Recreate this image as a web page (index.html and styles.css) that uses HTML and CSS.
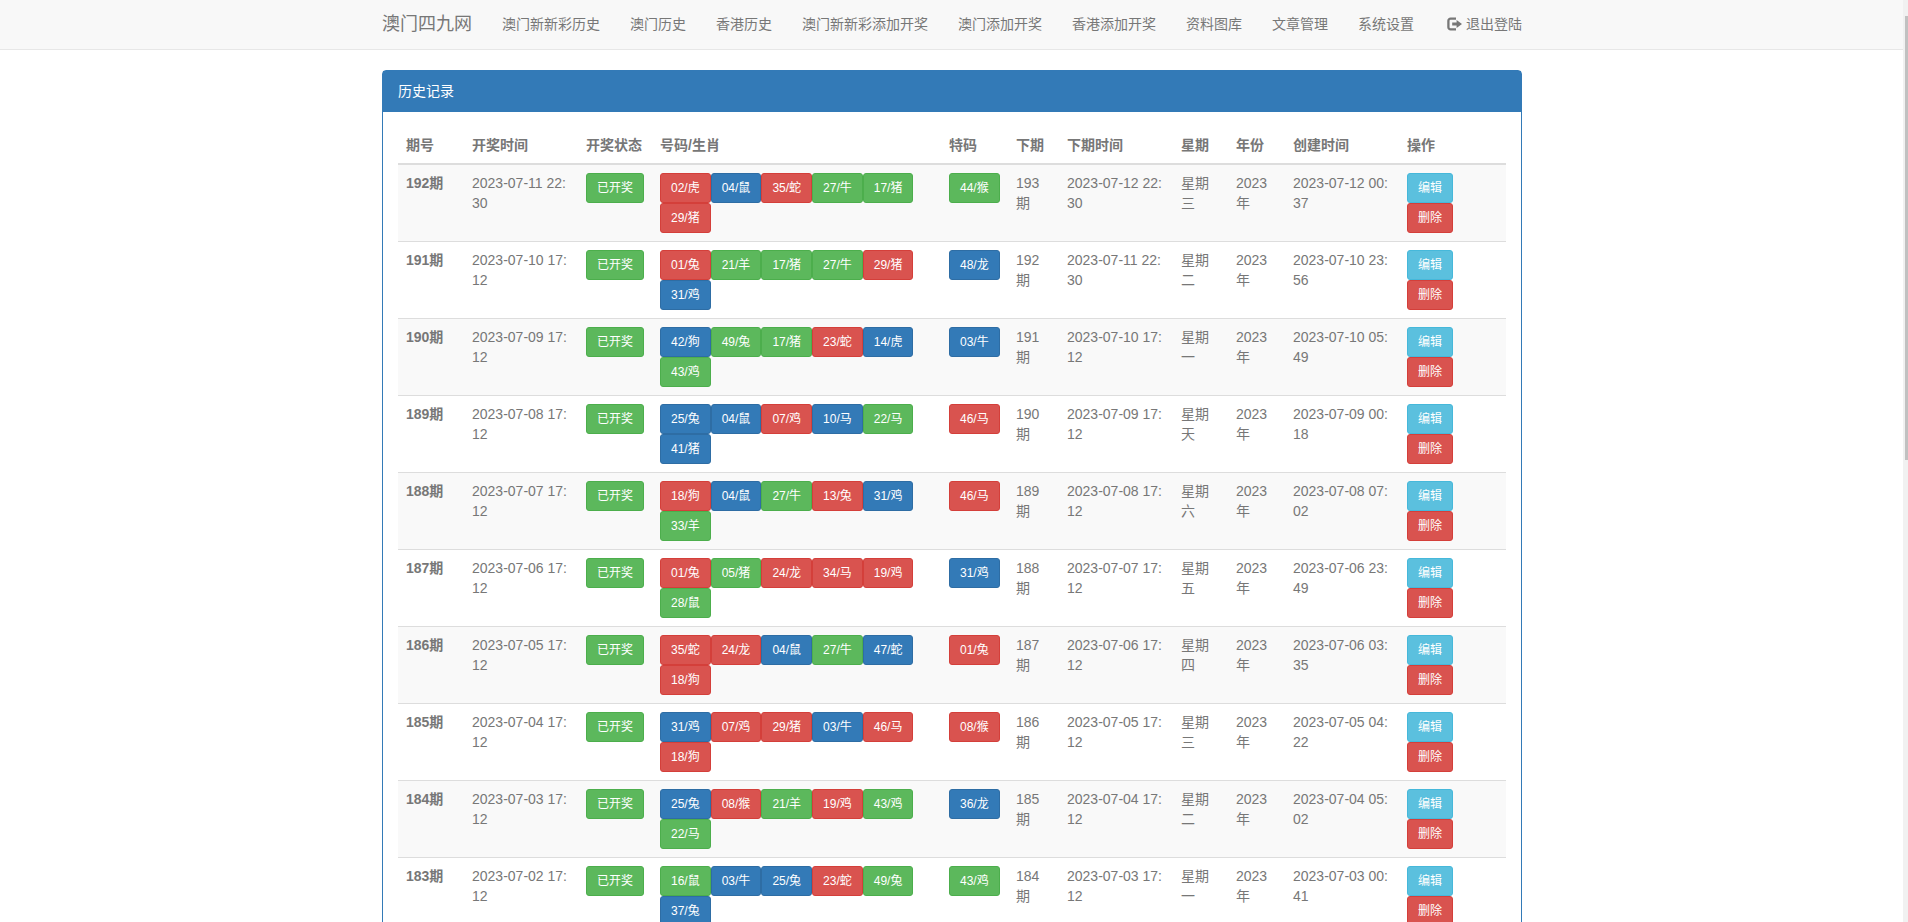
FILE: index.html
```
<!DOCTYPE html>
<html lang="zh-CN">
<head>
<meta charset="utf-8">
<meta name="viewport" content="width=device-width, initial-scale=1">
<title>历史记录</title>
<link rel="stylesheet" href="styles.css">
</head>
<body>
<nav class="navbar">
  <div class="container navbar-inner">
    <a class="brand" href="#">澳门四九网</a>
    <ul class="nav">
      <li><a href="#">澳门新新彩历史</a></li>
      <li><a href="#">澳门历史</a></li>
      <li><a href="#">香港历史</a></li>
      <li><a href="#">澳门新新彩添加开奖</a></li>
      <li><a href="#">澳门添加开奖</a></li>
      <li><a href="#">香港添加开奖</a></li>
      <li><a href="#">资料图库</a></li>
      <li><a href="#">文章管理</a></li>
      <li><a href="#">系统设置</a></li>
    </ul>
    <a class="logout" href="#"><svg class="icon" viewBox="0 0 15 14" aria-hidden="true"><path d="M9 1.6H3.6a2.2 2.2 0 0 0-2.2 2.2v6.4a2.2 2.2 0 0 0 2.2 2.2H9" fill="none" stroke="currentColor" stroke-width="2.3"/><path d="M5.2 5.5h4.4V2.9L15 7l-5.4 4.1V8.5H5.2z" fill="currentColor"/></svg>退出登陆</a>
  </div>
</nav>

<main class="container">
  <section class="panel">
    <h1 class="panel-heading">历史记录</h1>
    <div class="panel-body">
      <table class="table">
        <colgroup>
          <col class="c-issue"><col class="c-time"><col class="c-status"><col class="c-numbers"><col class="c-special"><col class="c-next"><col class="c-time"><col class="c-week"><col class="c-year"><col class="c-time"><col class="c-actions">
        </colgroup>
        <thead>
          <tr><th>期号</th><th>开奖时间</th><th>开奖状态</th><th>号码/生肖</th><th>特码</th><th>下期</th><th>下期时间</th><th>星期</th><th>年份</th><th>创建时间</th><th>操作</th></tr>
        </thead>
        <tbody>
          <tr>
            <th scope="row">192期</th><td>2023-07-11 22:<wbr>30</td>
            <td><button class="btn green">已开奖</button></td>
            <td><div class="group"><button class="btn red">02/虎</button><button class="btn blue">04/鼠</button><button class="btn red">35/蛇</button><button class="btn green">27/牛</button><button class="btn green">17/猪</button><button class="btn red">29/猪</button></div></td>
            <td><button class="btn green">44/猴</button></td>
            <td>193期</td><td>2023-07-12 22:<wbr>30</td><td>星期三</td><td>2023年</td><td>2023-07-12 00:<wbr>37</td>
            <td><div class="group"><button class="btn cyan">编辑</button><button class="btn red">删除</button></div></td>
          </tr>
          <tr>
            <th scope="row">191期</th><td>2023-07-10 17:<wbr>12</td>
            <td><button class="btn green">已开奖</button></td>
            <td><div class="group"><button class="btn red">01/兔</button><button class="btn green">21/羊</button><button class="btn green">17/猪</button><button class="btn green">27/牛</button><button class="btn red">29/猪</button><button class="btn blue">31/鸡</button></div></td>
            <td><button class="btn blue">48/龙</button></td>
            <td>192期</td><td>2023-07-11 22:<wbr>30</td><td>星期二</td><td>2023年</td><td>2023-07-10 23:<wbr>56</td>
            <td><div class="group"><button class="btn cyan">编辑</button><button class="btn red">删除</button></div></td>
          </tr>
          <tr>
            <th scope="row">190期</th><td>2023-07-09 17:<wbr>12</td>
            <td><button class="btn green">已开奖</button></td>
            <td><div class="group"><button class="btn blue">42/狗</button><button class="btn green">49/兔</button><button class="btn green">17/猪</button><button class="btn red">23/蛇</button><button class="btn blue">14/虎</button><button class="btn green">43/鸡</button></div></td>
            <td><button class="btn blue">03/牛</button></td>
            <td>191期</td><td>2023-07-10 17:<wbr>12</td><td>星期一</td><td>2023年</td><td>2023-07-10 05:<wbr>49</td>
            <td><div class="group"><button class="btn cyan">编辑</button><button class="btn red">删除</button></div></td>
          </tr>
          <tr>
            <th scope="row">189期</th><td>2023-07-08 17:<wbr>12</td>
            <td><button class="btn green">已开奖</button></td>
            <td><div class="group"><button class="btn blue">25/兔</button><button class="btn blue">04/鼠</button><button class="btn red">07/鸡</button><button class="btn blue">10/马</button><button class="btn green">22/马</button><button class="btn blue">41/猪</button></div></td>
            <td><button class="btn red">46/马</button></td>
            <td>190期</td><td>2023-07-09 17:<wbr>12</td><td>星期天</td><td>2023年</td><td>2023-07-09 00:<wbr>18</td>
            <td><div class="group"><button class="btn cyan">编辑</button><button class="btn red">删除</button></div></td>
          </tr>
          <tr>
            <th scope="row">188期</th><td>2023-07-07 17:<wbr>12</td>
            <td><button class="btn green">已开奖</button></td>
            <td><div class="group"><button class="btn red">18/狗</button><button class="btn blue">04/鼠</button><button class="btn green">27/牛</button><button class="btn red">13/兔</button><button class="btn blue">31/鸡</button><button class="btn green">33/羊</button></div></td>
            <td><button class="btn red">46/马</button></td>
            <td>189期</td><td>2023-07-08 17:<wbr>12</td><td>星期六</td><td>2023年</td><td>2023-07-08 07:<wbr>02</td>
            <td><div class="group"><button class="btn cyan">编辑</button><button class="btn red">删除</button></div></td>
          </tr>
          <tr>
            <th scope="row">187期</th><td>2023-07-06 17:<wbr>12</td>
            <td><button class="btn green">已开奖</button></td>
            <td><div class="group"><button class="btn red">01/兔</button><button class="btn green">05/猪</button><button class="btn red">24/龙</button><button class="btn red">34/马</button><button class="btn red">19/鸡</button><button class="btn green">28/鼠</button></div></td>
            <td><button class="btn blue">31/鸡</button></td>
            <td>188期</td><td>2023-07-07 17:<wbr>12</td><td>星期五</td><td>2023年</td><td>2023-07-06 23:<wbr>49</td>
            <td><div class="group"><button class="btn cyan">编辑</button><button class="btn red">删除</button></div></td>
          </tr>
          <tr>
            <th scope="row">186期</th><td>2023-07-05 17:<wbr>12</td>
            <td><button class="btn green">已开奖</button></td>
            <td><div class="group"><button class="btn red">35/蛇</button><button class="btn red">24/龙</button><button class="btn blue">04/鼠</button><button class="btn green">27/牛</button><button class="btn blue">47/蛇</button><button class="btn red">18/狗</button></div></td>
            <td><button class="btn red">01/兔</button></td>
            <td>187期</td><td>2023-07-06 17:<wbr>12</td><td>星期四</td><td>2023年</td><td>2023-07-06 03:<wbr>35</td>
            <td><div class="group"><button class="btn cyan">编辑</button><button class="btn red">删除</button></div></td>
          </tr>
          <tr>
            <th scope="row">185期</th><td>2023-07-04 17:<wbr>12</td>
            <td><button class="btn green">已开奖</button></td>
            <td><div class="group"><button class="btn blue">31/鸡</button><button class="btn red">07/鸡</button><button class="btn red">29/猪</button><button class="btn blue">03/牛</button><button class="btn red">46/马</button><button class="btn red">18/狗</button></div></td>
            <td><button class="btn red">08/猴</button></td>
            <td>186期</td><td>2023-07-05 17:<wbr>12</td><td>星期三</td><td>2023年</td><td>2023-07-05 04:<wbr>22</td>
            <td><div class="group"><button class="btn cyan">编辑</button><button class="btn red">删除</button></div></td>
          </tr>
          <tr>
            <th scope="row">184期</th><td>2023-07-03 17:<wbr>12</td>
            <td><button class="btn green">已开奖</button></td>
            <td><div class="group"><button class="btn blue">25/兔</button><button class="btn red">08/猴</button><button class="btn green">21/羊</button><button class="btn red">19/鸡</button><button class="btn green">43/鸡</button><button class="btn green">22/马</button></div></td>
            <td><button class="btn blue">36/龙</button></td>
            <td>185期</td><td>2023-07-04 17:<wbr>12</td><td>星期二</td><td>2023年</td><td>2023-07-04 05:<wbr>02</td>
            <td><div class="group"><button class="btn cyan">编辑</button><button class="btn red">删除</button></div></td>
          </tr>
          <tr>
            <th scope="row">183期</th><td>2023-07-02 17:<wbr>12</td>
            <td><button class="btn green">已开奖</button></td>
            <td><div class="group"><button class="btn green">16/鼠</button><button class="btn blue">03/牛</button><button class="btn blue">25/兔</button><button class="btn red">23/蛇</button><button class="btn green">49/兔</button><button class="btn blue">37/兔</button></div></td>
            <td><button class="btn green">43/鸡</button></td>
            <td>184期</td><td>2023-07-03 17:<wbr>12</td><td>星期一</td><td>2023年</td><td>2023-07-03 00:<wbr>41</td>
            <td><div class="group"><button class="btn cyan">编辑</button><button class="btn red">删除</button></div></td>
          </tr>
        </tbody>
      </table>
    </div>
  </section>
</main>
<div class="scrollbar" aria-hidden="true"><div class="thumb"></div></div>
</body>
</html>
```

FILE: styles.css
```
* { box-sizing: border-box; }

body {
  margin: 0;
  height: 100vh;
  overflow: hidden;
  padding-right: 4px;
  background: #fff;
  color: #777;
  font-family: "Liberation Sans", "Noto Sans CJK SC", sans-serif;
  font-size: 14px;
  line-height: 20px;
}

a { color: inherit; text-decoration: none; }

.container {
  max-width: 1170px;
  margin: 0 auto;
  padding: 0 15px;
}

/* Top navigation */
.navbar {
  margin: 0 -4px 20px 0;
  padding-right: 4px;
  background: #f8f8f8;
  border-bottom: 1px solid #e7e7e7;
}
.navbar-inner {
  display: flex;
  align-items: center;
  min-height: 49px;
  padding-bottom: 2px;
}
.brand { margin-right: 15px; font-size: 18px; white-space: nowrap; }
.nav {
  display: flex;
  margin: 0;
  padding: 0;
  list-style: none;
}
.nav a { display: block; padding: 13px 15px; white-space: nowrap; }
.logout {
  display: flex;
  align-items: center;
  gap: 4px;
  margin-left: auto;
  white-space: nowrap;
}
.icon { width: 15px; height: 14px; }

/* Panel */
.panel {
  border: 1px solid #337ab7;
  border-radius: 4px;
}
.panel-heading {
  margin: 0;
  padding: 10px 15px 11px;
  background: #337ab7;
  color: #fff;
  font-size: 14px;
  font-weight: 400;
}
.panel-body { padding: 15px; }

/* Records table */
.table {
  width: 100%;
  table-layout: fixed;
  border-collapse: collapse;
}
.table th,
.table td {
  padding: 8px;
  border-top: 1px solid #ddd;
  text-align: left;
  vertical-align: top;
}
.table thead th { border-top: 0; border-bottom: 2px solid #ddd; }
.table tbody tr:nth-child(odd) { background: #f9f9f9; }

.c-issue { width: 66px; }
.c-time { width: 114px; }
.c-status { width: 74px; }
.c-numbers { width: 289px; }
.c-special { width: 67px; }
.c-next { width: 51px; }
.c-week { width: 55px; }
.c-year { width: 57px; }
.c-actions { width: 107px; }

.group { display: flex; flex-wrap: wrap; }

.btn {
  display: block;
  padding: 5px 10px;
  border: 1px solid;
  border-radius: 3px;
  color: #fff;
  font-family: inherit;
  font-size: 12px;
  line-height: 18px;
  white-space: nowrap;
  cursor: pointer;
}
.green { background: #5cb85c; border-color: #4cae4c; }
.red { background: #d9534f; border-color: #d43f3a; }
.blue { background: #337ab7; border-color: #2e6da4; }
.cyan { background: #5bc0de; border-color: #46b8da; }

/* Page scrollbar */
.scrollbar {
  position: fixed;
  top: 0;
  right: 0;
  bottom: 0;
  width: 5px;
  padding: 16px 0 0 2px;
  background: #f1f1f1;
}
.thumb { height: 49%; background: #c1c1c1; }
```
